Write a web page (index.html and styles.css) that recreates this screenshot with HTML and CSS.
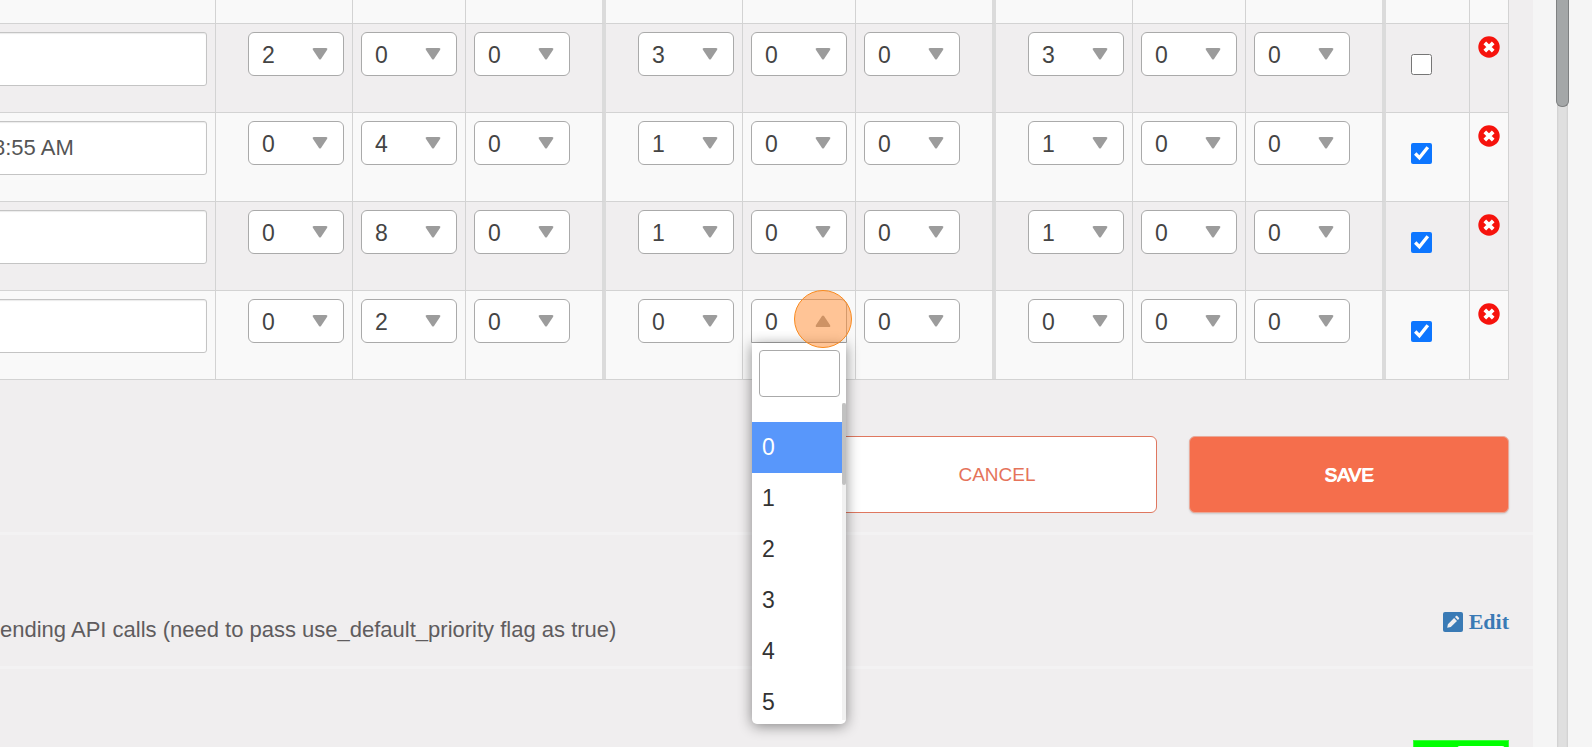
FILE: index.html
```html
<!DOCTYPE html>
<html lang="en">
<head>
    <meta charset="UTF-8">
    <meta name="viewport" content="width=device-width, initial-scale=1.0">
    <title>Priority Settings</title>
    <link rel="stylesheet" href="styles.css">
</head>
<body>

    <main class="panel">
        <section class="section">
            <table class="rules">
                <tbody id="rule-list"></tbody>
            </table>
            <div class="actions">
                <button class="btn cancel-btn" type="button">CANCEL</button>
                <button class="btn save-btn" type="button">SAVE</button>
            </div>
        </section>

        <section class="section setting">
            <p class="setting-text">ending API calls (need to pass use_default_priority flag as true)</p>
            <a class="edit-link" href="#">
                <svg class="edit-icon" viewBox="0 0 20 20">
                    <rect width="20" height="20" rx="2" fill="currentColor"/>
                    <path d="M4.2 15.8l.7-3.6 6.2-6.2 2.9 2.9-6.2 6.2zM12 5.1l1-1c.4-.4.9-.4 1.300 0l1.600 1.600c.4.4.4.9 0 1.300l-1 1z" fill="#f0eeef"/>
                </svg>
                Edit
            </a>
        </section>

        <section class="section toggle-row">
            <input class="toggle" type="checkbox" aria-label="Enabled" checked>
        </section>
    </main>

    <div class="scrollbar"><div class="scroll-thumb"></div></div>

    <script src="script.js"></script>
</body>
</html>
```

FILE: styles.css
```css
* {
    box-sizing: border-box;
}
body {
    display: flex;
    height: 100vh;
    margin: 0;
    overflow: hidden;
    font-family: "Liberation Sans", Arial, sans-serif;
    font-size: 22px;
    color: #5f5c5e;
    background-color: #f5f5f5;
}

/* panel */
.panel {
    flex: 1;
    margin-left: -32px;
    background-color: #f0eeef;
}
.section {
    padding: 0 24px 19px 0;
    border-bottom: 3px solid #f3f2f3;
}

/* rules table */
.rules {
    width: 100%;
    border-spacing: 0;
    border-bottom: 1px solid #d3d3d3;
}
.rules tr {
    background-color: #f9f9f9;
}
.rules tr:nth-child(even) {
    background-color: #f0eeef;
}
.rules td {
    height: 89px;
    padding: 8px 8px 0;
    border-top: 1px solid #d3d3d3;
    border-right: 1px solid #d3d3d3;
    vertical-align: top;
}
.rules .spacer td {
    height: 23px;
    padding-top: 0;
    border-top: 0;
}
.rules .first {
    width: 137px;
    padding-left: 32px;
}
.rules .middle {
    width: 113px;
}
.rules .last {
    width: 140px;
    padding-right: 32px;
    border-right: 4px solid #dbdbdb;
}
.rules .check-cell {
    width: 84px;
    padding: 30px 0 0 25px;
}
.rules .delete-cell {
    width: 39px;
    padding-top: 12px;
}
.rules .name-cell {
    padding-left: 12px;
}
.name {
    display: block;
    width: 100%;
    height: 54px;
    padding: 0 12px;
    border: 1px solid #c4c4c4;
    border-radius: 3px;
    font: inherit;
    color: #555;
    background-color: white;
    box-shadow: inset 0 1px 1px rgba(0, 0, 0, 0.08);
}

/* dropdowns */
.picker {
    position: relative;
    width: 96px;
}
.picker::after {
    content: "";
    position: absolute;
    top: 16px;
    right: 16px;
    width: 16px;
    height: 12px;
    background-color: #9c9c9c;
    clip-path: path("M2 0 H14 Q16 0 15 2 L9 11 Q8 12 7 11 L1 2 Q0 0 2 0 Z");
    pointer-events: none;
}
.picker.open::after {
    clip-path: path("M2 12 H14 Q16 12 15 10 L9 1 Q8 0 7 1 L1 10 Q0 12 2 12 Z");
}
.select {
    display: block;
    width: 100%;
    height: 44px;
    padding: 2px 13px 0;
    border: 1px solid #aaa;
    border-radius: 6px;
    appearance: none;
    font: inherit;
    font-size: 23px;
    color: #444;
    background-color: white;
}
.open .select {
    border-radius: 6px 6px 0 0;
}
.menu {
    position: absolute;
    z-index: 1;
    top: 44px;
    left: 1px;
    width: 94px;
    height: 381px;
    padding: 7px 0 4px;
    border-radius: 0 0 5px 5px;
    background-color: white;
    box-shadow: 0 2px 14px rgba(0, 0, 0, 0.45);
    clip-path: inset(-12px -20px -20px -20px);
}
.search {
    display: block;
    width: 81px;
    height: 47px;
    margin: 0 7px 6px;
    padding: 0 8px;
    border: 1px solid #aaa;
    border-radius: 4px;
    font: inherit;
}
.options {
    position: relative;
    height: 317px;
    margin: 0;
    padding: 19px 4px 0 0;
    overflow: hidden;
    list-style: none;
    font-size: 23px;
    line-height: 51px;
    color: #333;
}
.options li {
    padding-left: 10px;
}
.options .active {
    color: white;
    background-color: #5897fb;
}
.options-track {
    position: absolute;
    top: 0;
    right: 0;
    width: 4px;
    height: 100%;
    background-color: #f1f1f1;
}
.options-thumb {
    height: 82px;
    border-radius: 2px;
    background-color: #c1c1c1;
}
.click-mark {
    position: absolute;
    z-index: 2;
    top: -9px;
    left: 43px;
    width: 58px;
    height: 58px;
    border: 1px solid #f98a1e;
    border-radius: 50%;
    background-color: rgba(255, 137, 45, 0.5);
}

/* last two columns */
.checkbox {
    display: block;
    width: 21px;
    height: 21px;
    margin: 0;
    accent-color: #0d76ff;
}
.delete-btn {
    display: block;
    width: 22px;
    height: 22px;
    padding: 0;
    border: 0;
    background: none;
    cursor: pointer;
}
.delete-btn svg {
    display: block;
}

/* buttons */
.actions {
    display: flex;
    justify-content: flex-end;
    gap: 32px;
    padding-top: 56px;
}
.btn {
    width: 320px;
    height: 77px;
    border-radius: 6px;
    font-family: inherit;
    font-size: 19px;
    cursor: pointer;
}
.cancel-btn {
    border: 1px solid #df775f;
    color: #e5735a;
    background-color: white;
}
.save-btn {
    border: 1px solid #e9a999;
    color: white;
    background-color: #f56e4c;
    text-shadow: 0 1px white, 1px 0 white;
    box-shadow: 0 1px 2px rgba(0, 0, 0, 0.15);
}

/* settings below the table */
.setting {
    display: flex;
    justify-content: space-between;
    align-items: flex-start;
    height: 134px;
    padding: 72px 24px 0 32px;
}
.setting-text {
    margin: 8px 0 0;
    line-height: 30px;
}
.edit-link {
    display: flex;
    align-items: center;
    gap: 6px;
    font-family: "Liberation Serif", serif;
    font-weight: bold;
    line-height: 30px;
    color: #3a7ab5;
    text-decoration: none;
}
.edit-icon {
    width: 20px;
    height: 20px;
}
.toggle-row {
    display: flex;
    justify-content: flex-end;
    padding-top: 71px;
    border-bottom: 0;
}
.toggle {
    display: flex;
    justify-content: flex-end;
    width: 96px;
    height: 48px;
    margin: 0;
    padding: 5px 3px;
    border: 1px solid #3dfa3d;
    appearance: none;
    background-color: #0f0;
}
.toggle::after {
    content: "";
    width: 48px;
    border-radius: 3px;
    background-color: white;
}

/* page scrollbar */
.scrollbar {
    width: 13px;
    margin: 0 23px;
    background: linear-gradient(to right, transparent 1px, #cfcfcf 1px, #dfdfdf 3px, #dfdfdf 10px, #cfcfcf 12px, transparent 12px);
}
.scroll-thumb {
    height: 107px;
    border: 1px solid #7f8182;
    border-top: 0;
    border-radius: 0 0 6px 6px;
    background-color: #a4a7a8;
}
```

FILE: script.js
```js
const rules = [
    { name: "", values: [2, 0, 0, 3, 0, 0, 3, 0, 0], checked: false },
    { name: "8:55 AM", values: [0, 4, 0, 1, 0, 0, 1, 0, 0], checked: true },
    { name: "", values: [0, 8, 0, 1, 0, 0, 1, 0, 0], checked: true },
    { name: "", values: [0, 2, 0, 0, 0, 0, 0, 0, 0], checked: true, open: 4 }
];
const columns = ["first", "middle", "last"];

const deleteIcon = `<svg width="22" height="22" viewBox="0 0 22 22">
    <circle cx="11" cy="11" r="10.700" fill="#f6130d"/>
    <path d="M6.800 6.800l8.400 8.400M15.200 6.800l-8.400 8.400" stroke="white" stroke-width="3.800"/>
</svg>`;

function menu() {
    const items = [0, 1, 2, 3, 4, 5].map(n => `<li class="${n === 0 ? "active" : ""}">${n}</li>`).join("");
    return `<div class="menu">
        <input class="search" type="text" aria-label="Search">
        <ul class="options">${items}<div class="options-track"><div class="options-thumb"></div></div></ul>
    </div>
    <div class="click-mark"></div>`;
}

function picker(value, label, open) {
    let options = "";
    for (let i = 0; i < 10; i++) {
        options += `<option ${i === value ? "selected" : ""}>${i}</option>`;
    }
    return `<div class="picker ${open ? "open" : ""}">
        <select class="select" aria-label="${label}">${options}</select>
        ${open ? menu() : ""}
    </div>`;
}

function displayRules() {
    // bottom edge of the row scrolled out above
    let html = `<tr class="spacer"><td></td>`;
    for (let i = 0; i < 9; i++) {
        html += `<td class="${columns[i % 3]}"></td>`;
    }
    html += `<td class="check-cell"></td><td class="delete-cell"></td></tr>`;

    rules.forEach((rule, row) => {
        html += `<tr>
            <td class="name-cell"><input class="name" type="text" aria-label="Name" value="${rule.name}"></td>
            ${rule.values.map((v, i) => `<td class="${columns[i % 3]}">${picker(v, `Row ${row + 1} value ${i + 1}`, rule.open === i)}</td>`).join("")}
            <td class="check-cell"><input class="checkbox" type="checkbox" aria-label="Active" ${rule.checked ? "checked" : ""}></td>
            <td class="delete-cell"><button class="delete-btn" type="button" aria-label="Delete">${deleteIcon}</button></td>
        </tr>`;
    });
    document.getElementById("rule-list").innerHTML = html;
}

displayRules();
```
